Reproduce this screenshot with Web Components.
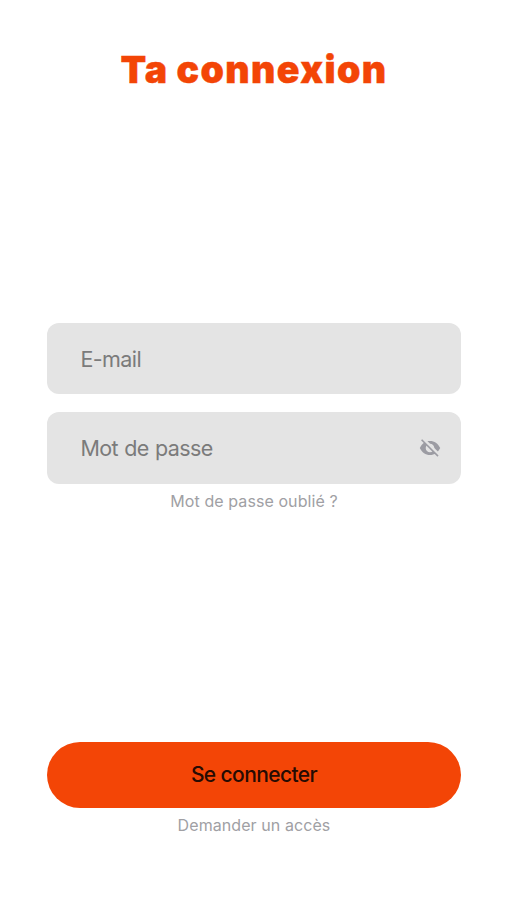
<!DOCTYPE html>
<html lang="fr"><head><meta charset="utf-8"><title>Ta connexion</title>
<style>html,body{margin:0;height:100%;background:#fff}body{font-family:Inter,"Liberation Sans",sans-serif}</style></head>
<body><login-screen></login-screen>
<script>
const define=(name,html)=>customElements.define(name,class extends HTMLElement{
  constructor(){super();this.attachShadow({mode:"open"}).innerHTML=html;}
});
define("screen-title",`<style>:host{display:block;height:40px;text-align:center}h1{margin:0;font-size:37.5px;line-height:40px;font-weight:900;letter-spacing:1.4px;word-spacing:-1px;color:#f34506;-webkit-text-stroke:.4px #f34506;white-space:nowrap}</style><h1><slot></slot></h1>`);
define("text-field",`<style>:host{display:flex;align-items:center;justify-content:space-between;box-sizing:border-box;height:71.6px;padding:.7px 20px 0 33.5px;border-radius:12px;background:#e4e4e4;color:#7b7b7b;font-size:21.5px;letter-spacing:-.6px;word-spacing:.8px}</style><span><slot></slot></span><slot name="icon"></slot>`);
define("eye-off-icon",`<style>:host{display:block;width:22px;height:22px;color:#9c9ca3}svg{display:block}</style><svg width="22" height="22" viewBox="0 0 22 22"><path fill="currentColor" fill-rule="evenodd" d="M.8 11C3 6.500 6.600 4 11 4s8 2.500 10.200 7C19 15.500 15.400 18 11 18S3 15.500.8 11zM11 6.700a4.300 4.300 0 1 0 0 8.600a4.300 4.300 0 1 0 0-8.600z"/><path d="M4 1.700 20.500 18.200" stroke="#e4e4e4" stroke-width="3"/><path d="M2.600 2.700 19 19.100" stroke="currentColor" stroke-width="1.600"/></svg>`);
define("text-link",`<style>:host{display:block;height:20px;text-align:center;font-size:16px;line-height:20px;color:#a0a0a4;letter-spacing:.08px}</style><slot></slot>`);
define("primary-button",`<style>:host{display:block}button{display:block;width:100%;height:66px;padding:0;border:0;border-radius:33px;background:#f34506;color:#260b03;font:500 21px Inter,sans-serif;letter-spacing:-.6px}</style><button><slot></slot></button>`);
define("login-screen",`<style>:host{display:flex;flex-direction:column;box-sizing:border-box;height:900px;padding:50px 46px 65px 47px}
.fields{margin-top:232.75px;display:flex;flex-direction:column;gap:17.7px}text-link{margin-top:7.4px}primary-button{margin-top:auto}</style>
<screen-title>Ta connexion</screen-title><div class="fields"><text-field>E-mail</text-field><text-field>Mot de passe<eye-off-icon slot="icon"></eye-off-icon></text-field></div><text-link>Mot de passe oublié ?</text-link><primary-button>Se connecter</primary-button><text-link>Demander un accès</text-link>`);
</script></body></html>
